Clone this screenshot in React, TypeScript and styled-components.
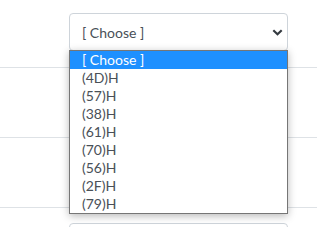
import React from "react";
import styled, { createGlobalStyle } from "styled-components";

const Global = createGlobalStyle`
  html, body { margin: 0; padding: 0; background: #fff; }
  body { font-family: Lato, "Open Sans", sans-serif; overflow: hidden; }
`;

const Table = styled.div`
  display: flex;
  flex-direction: column;
  margin-top: -3px;
`;

const Row = styled.div`
  display: grid;
  grid-template-columns: 69px 219px 1fr;
  border-top: 1px solid #dee2e6;
  padding: 15px 0 16px;
`;

const Cell = styled.div`
  position: relative;
`;

const SelectBox = styled.div`
  box-sizing: border-box;
  height: 38px;
  border: 1px solid #ced4da;
  border-radius: 4px;
  background: #fff;
  display: flex;
  align-items: center;
  justify-content: space-between;
  padding: 0 4px 0 12px;
  color: #495057;
  font-size: 14px;
`;

const Menu = styled.ul`
  position: absolute;
  top: 37px;
  left: 0;
  width: 219px;
  box-sizing: border-box;
  margin: 0;
  padding: 0;
  list-style: none;
  background: #fff;
  border: 1px solid #767676;
  box-shadow: 0 2px 8px rgba(0, 0, 0, 0.28);
  z-index: 2;
`;

const Item = styled.li<{ $active?: boolean }>`
  height: 18px;
  line-height: 18px;
  padding-left: 12px;
  font-size: 14px;
  color: ${(p) => (p.$active ? "#fff" : "#495057")};
  background: ${(p) => (p.$active ? "#1e90ff" : "transparent")};
`;

const Chevron = () => (
  <svg width="11" height="7" viewBox="0 0 11 7">
    <polyline points="1.3,1.3 5.5,5.2 9.7,1.3" fill="none" stroke="#343a40" strokeWidth="2.2" />
  </svg>
);

const options = ["[ Choose ]", "(4D)H", "(57)H", "(38)H", "(61)H", "(70)H", "(56)H", "(2F)H", "(79)H"];

export default function App() {
  return (
    <>
      <Global />
      <Table>
        {[0, 1, 2, 3].map((r) => (
          <Row key={r}>
            <div />
            <Cell>
              <SelectBox>
                <span>[ Choose ]</span>
                <Chevron />
              </SelectBox>
              {r === 0 && (
                <Menu>
                  {options.map((o, i) => (
                    <Item key={o} $active={i === 0}>
                      {o}
                    </Item>
                  ))}
                </Menu>
              )}
            </Cell>
            <div />
          </Row>
        ))}
      </Table>
    </>
  );
}
